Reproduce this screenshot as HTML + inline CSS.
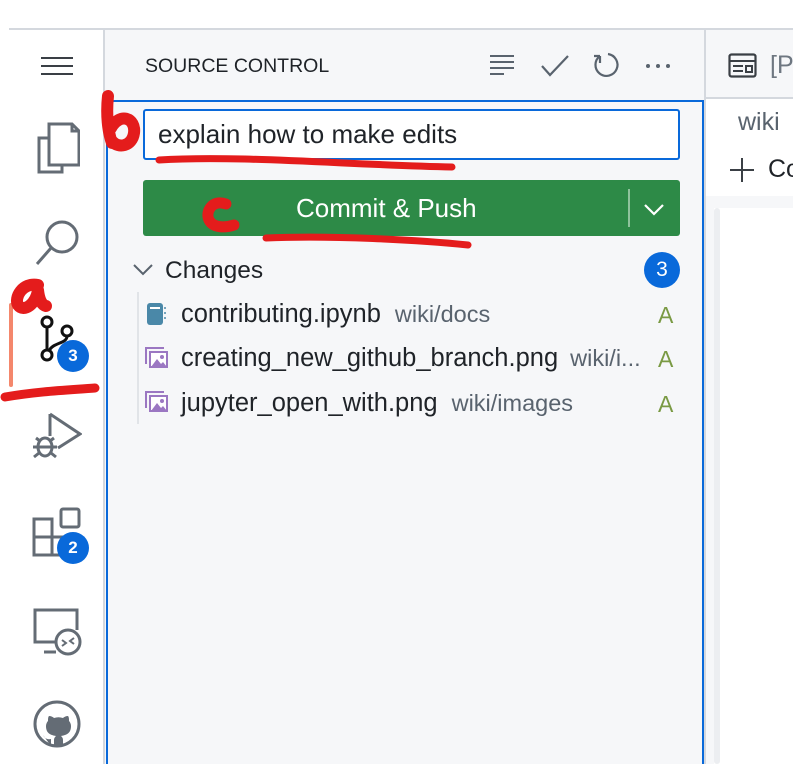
<!DOCTYPE html>
<html><head><meta charset="utf-8"><style>
*{margin:0;padding:0;box-sizing:border-box}
body{width:793px;height:764px;overflow:hidden;background:#fff;font-family:"Liberation Sans",sans-serif;position:relative;color:#1f2328}
.abs{position:absolute}
.t{position:absolute;white-space:nowrap}
.p{font-size:23.5px;color:#59636e;margin-left:10px}
</style></head><body>
<div class="abs" style="left:9px;top:28px;width:784px;height:2px;background:#d4d8de"></div>
<div class="abs" style="left:103px;top:30px;width:2px;height:734px;background:#d4d8de"></div>
<div class="abs" style="left:105px;top:30px;width:600px;height:734px;background:#f6f7f9"></div>
<div class="abs" style="left:704px;top:30px;width:2px;height:734px;background:#d4d8de"></div>
<div class="abs" style="left:106px;top:100px;width:598px;height:664px;border:2px solid #0969da;border-bottom:none"></div>
<div class="abs" style="left:706px;top:30px;width:87px;height:68px;background:#f6f7f9"></div>
<div class="abs" style="left:706px;top:97px;width:87px;height:2px;background:#d4d8de"></div>
<div class="abs" style="left:706px;top:99px;width:87px;height:97px;background:#fff"></div>
<div class="abs" style="left:706px;top:196px;width:87px;height:568px;background:#f6f7f9"></div>
<div class="abs" style="left:714px;top:208px;width:79px;height:556px;background:#fff"></div>
<div class="abs" style="left:714px;top:208px;width:6px;height:556px;background:#eceef1;border-radius:3px"></div>
<svg class="abs" style="left:728px;top:53px" width="30" height="26" viewBox="0 0 30 26"><rect x="1.5" y="1.5" width="26" height="22" rx="2" fill="none" stroke="#3a3f45" stroke-width="2.2"/><path d="M2 8h25M5 13h10M5 18h10" stroke="#3a3f45" stroke-width="2"/><rect x="18" y="13" width="6" height="6" fill="none" stroke="#3a3f45" stroke-width="2"/></svg>
<div class="t" style="left:770px;top:51px;font-size:25px;color:#6e7781">[P</div>
<div class="t" style="left:738px;top:108px;font-size:25px;color:#59636e">wiki</div>
<svg class="abs" style="left:729px;top:157px" width="26" height="26"><path d="M13 1v24M1 13h24" stroke="#3a3f45" stroke-width="2"/></svg>
<div class="t" style="left:768px;top:155px;font-size:25px;color:#1f2328">Co</div>

<svg class="abs" style="left:40px;top:56px" width="34" height="20"><path d="M1 2h32M1 10h32M1 18h32" stroke="#3a3f45" stroke-width="2"/></svg>
<svg class="abs" style="left:34px;top:122px" width="46" height="52" viewBox="0 0 46 52" fill="none" stroke="#646c75" stroke-width="3"><path d="M15 16h-10v34h23v-6"/><path d="M15 2h23l7 7v34h-30z"/><path d="M38 2v7h7"/></svg>
<svg class="abs" style="left:34px;top:218px" width="48" height="50" fill="none" stroke="#646c75" stroke-width="3"><circle cx="28" cy="19" r="15"/><path d="M17 30l-14 16"/></svg>
<svg class="abs" style="left:36px;top:314px" width="40" height="50" fill="none" stroke="#111" stroke-width="3"><circle cx="11" cy="8" r="5"/><circle cx="31" cy="17" r="5"/><circle cx="11" cy="41" r="5"/><path d="M11 13v23M31 22c0 8-14 6-18 15"/></svg>
<div class="abs" style="left:57px;top:340px;width:32px;height:32px;border-radius:50%;background:#0969da;color:#fff;font-size:17px;font-weight:bold;text-align:center;line-height:32px">3</div>
<svg class="abs" style="left:32px;top:410px" width="50" height="52" fill="none" stroke="#646c75" stroke-width="3"><path d="M18 4v22M18 4l30 20-22 14"/><ellipse cx="13" cy="37" rx="7" ry="9"/><path d="M1 37h24M4 28l4 3M22 28l-4 3M2 47l5-4M24 47l-5-4M7 37h12" /></svg>
<svg class="abs" style="left:32px;top:506px" width="50" height="52" fill="none" stroke="#646c75" stroke-width="3"><rect x="2" y="13" width="18" height="18"/><rect x="2" y="31" width="18" height="18"/><rect x="20" y="31" width="18" height="18"/><rect x="29" y="3" width="18" height="18" rx="2"/></svg>
<div class="abs" style="left:57px;top:532px;width:32px;height:32px;border-radius:50%;background:#0969da;color:#fff;font-size:17px;font-weight:bold;text-align:center;line-height:32px">2</div>
<svg class="abs" style="left:32px;top:606px" width="52" height="50" fill="none" stroke="#646c75" stroke-width="3"><path d="M24 36H3V4h42v20M12 46h12"/><circle cx="36" cy="36" r="12"/><path d="M30 40l4-3-4-3M42 32l-4 3 4 3" stroke-width="2"/></svg>
<svg class="abs" style="left:32px;top:700px" width="50" height="50" viewBox="0 0 50 50"><circle cx="25" cy="24" r="22" fill="none" stroke="#646c75" stroke-width="3"/><path d="M19 46v-7c-5 1-7-2-8-4M31 46v-6c0-2-1-3-2-4 6-1 10-3 10-10 0-2-1-4-2-5 0-2 0-4-1-5-2 0-4 1-5 2-3-1-6-1-9 0-1-1-3-2-5-2-1 1-1 3-1 5-1 1-2 3-2 5 0 7 4 9 10 10-1 1-2 2-2 4v6z" fill="#646c75"/></svg>

<div class="t" style="left:145px;top:55px;font-size:19.5px;color:#1f2328">SOURCE CONTROL</div>
<svg class="abs" style="left:489px;top:54px" width="26" height="22"><path d="M1 2h24M1 8h24M1 14h24M1 20h14" stroke="#59636e" stroke-width="2"/></svg>
<svg class="abs" style="left:540px;top:54px" width="30" height="24"><path d="M2 12l8 9L28 2" fill="none" stroke="#59636e" stroke-width="2.2"/></svg>
<svg class="abs" style="left:592px;top:51px" width="28" height="28" fill="none" stroke="#59636e" stroke-width="2.2"><path d="M8 5A11 11 0 1 0 16 3M8 5V12M8 5h-6"/></svg>
<svg class="abs" style="left:645px;top:62px" width="28" height="8"><circle cx="3" cy="4" r="2" fill="#59636e"/><circle cx="13" cy="4" r="2" fill="#59636e"/><circle cx="23" cy="4" r="2" fill="#59636e"/></svg>

<div class="abs" style="left:143px;top:109px;width:537px;height:51px;border:2px solid #0969da;border-radius:3px;background:#fff"></div>
<div class="t" style="left:158px;top:119px;font-size:26px;color:#1f2328">explain how to make edits</div>
<div class="abs" style="left:143px;top:180px;width:537px;height:56px;background:#2d8a47;border-radius:3px"></div>
<div class="abs" style="left:628px;top:189px;width:2px;height:38px;background:#8fc39c"></div>
<div class="t" style="left:296px;top:193px;font-size:26px;color:#fff">Commit &amp; Push</div>
<svg class="abs" style="left:643px;top:202px" width="22" height="14"><path d="M2 3l9 9 9-9" fill="none" stroke="#fff" stroke-width="2.2"/></svg>

<svg class="abs" style="left:132px;top:263px" width="22" height="14"><path d="M2 2l9 9 9-9" fill="none" stroke="#59636e" stroke-width="2"/></svg>
<div class="t" style="left:165px;top:257px;font-size:24.5px;color:#1f2328">Changes</div>
<div class="abs" style="left:644px;top:252px;width:36px;height:36px;border-radius:50%;background:#0969da;color:#fff;font-size:21px;text-align:center;line-height:36px">3</div>
<div class="abs" style="left:137px;top:292px;width:2px;height:132px;background:#e1e4e8"></div>

<svg class="abs" style="left:146px;top:302px" width="22" height="24"><rect x="1" y="1" width="16" height="22" rx="3" fill="#4a88a8"/><rect x="4" y="5" width="10" height="2" fill="#fff"/><path d="M19 5v2M19 10v2M19 15v2" stroke="#4a88a8" stroke-width="1.5"/></svg>
<div class="t" style="left:181px;top:300px;font-size:25.5px;color:#1f2328">contributing.ipynb<span class="p" style="margin-left:14px">wiki/docs</span></div>
<div class="t" style="left:658px;top:302px;font-size:23px;color:#7a9a44">A</div>

<svg class="abs" style="left:145px;top:347px" width="24" height="22"><path d="M1 17V1h18" fill="none" stroke="#9b77c2" stroke-width="2"/><rect x="5" y="5" width="17" height="15" fill="#fff" stroke="#9b77c2" stroke-width="2"/><path d="M6 20l6-8 4 5 2-2 4 5z" fill="#9b77c2"/><circle cx="17" cy="10" r="2" fill="#9b77c2"/></svg>
<div class="t" style="left:181px;top:344px;font-size:25.5px;color:#1f2328">creating_new_github_branch.png<span class="p" style="margin-left:12px">wiki/i...</span></div>
<div class="t" style="left:658px;top:346px;font-size:23px;color:#7a9a44">A</div>

<svg class="abs" style="left:145px;top:391px" width="24" height="22"><path d="M1 17V1h18" fill="none" stroke="#9b77c2" stroke-width="2"/><rect x="5" y="5" width="17" height="15" fill="#fff" stroke="#9b77c2" stroke-width="2"/><path d="M6 20l6-8 4 5 2-2 4 5z" fill="#9b77c2"/><circle cx="17" cy="10" r="2" fill="#9b77c2"/></svg>
<div class="t" style="left:181px;top:389px;font-size:25.5px;color:#1f2328">jupyter_open_with.png<span class="p" style="margin-left:14px">wiki/images</span></div>
<div class="t" style="left:658px;top:391px;font-size:23px;color:#7a9a44">A</div>

<svg class="abs" style="left:0;top:0" width="793" height="764" fill="none" stroke-linecap="round" stroke-linejoin="round">
<path d="M11 305V385" stroke="#f4876c" stroke-width="4"/>
<path d="M5 397C40 391 70 390 95 388" stroke="#e41c1c" stroke-width="9"/>
<path d="M38 285C22 282 14 298 18 305C24 313 36 304 38 290C39 300 42 305 46 306" stroke="#e41c1c" stroke-width="12"/>
<path d="M108 96C106 115 108 132 112 143M111 128C120 112 136 118 134 133C132 147 118 148 113 142" stroke="#e41c1c" stroke-width="12"/>
<path d="M159 160C240 155 350 165 452 167" stroke="#e41c1c" stroke-width="7"/>
<path d="M226 204C212 199 205 212 209 220C213 228 225 228 234 225" stroke="#e41c1c" stroke-width="11"/>
<path d="M266 238C330 235 420 240 468 245" stroke="#e41c1c" stroke-width="7"/>
</svg>
</body></html>
